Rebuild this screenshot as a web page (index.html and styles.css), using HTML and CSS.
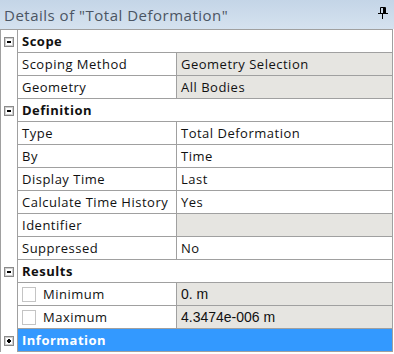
FILE: index.html
```html
<!DOCTYPE html>
<html lang="en">

<head>
    <meta charset="UTF-8">
    <title>Details of "Total Deformation"</title>
    <link rel="stylesheet" href="styles.css">
</head>

<body>
    <div class="title">
        <span>Details of "Total Deformation"</span>
        <svg class="pin" width="10" height="12" viewBox="0 0 10 12">
            <path d="M2.5 0.5h5v6h-5z" fill="none" stroke="#000" />
            <rect x="5" y="1" width="2" height="5" fill="#000" />
            <rect x="0" y="6" width="10" height="1" fill="#000" />
            <rect x="4" y="7" width="1" height="5" fill="#000" />
        </svg>
    </div>
    <div class="grid">
        <!-- Scope -->
        <div class="row head">
            <div class="gutter"><span class="box minus"></span></div>
            <div class="cells">Scope</div>
        </div>
        <div class="row">
            <div class="gutter"></div>
            <div class="cells"><div class="name">Scoping Method</div><div class="value ro">Geometry Selection</div></div>
        </div>
        <div class="row">
            <div class="gutter"></div>
            <div class="cells"><div class="name">Geometry</div><div class="value ro">All Bodies</div></div>
        </div>
        <!-- Definition -->
        <div class="row head">
            <div class="gutter"><span class="box minus"></span></div>
            <div class="cells">Definition</div>
        </div>
        <div class="row">
            <div class="gutter"></div>
            <div class="cells"><div class="name">Type</div><div class="value">Total Deformation</div></div>
        </div>
        <div class="row">
            <div class="gutter"></div>
            <div class="cells"><div class="name">By</div><div class="value">Time</div></div>
        </div>
        <div class="row">
            <div class="gutter"></div>
            <div class="cells"><div class="name">Display Time</div><div class="value">Last</div></div>
        </div>
        <div class="row">
            <div class="gutter"></div>
            <div class="cells"><div class="name">Calculate Time History</div><div class="value">Yes</div></div>
        </div>
        <div class="row">
            <div class="gutter"></div>
            <div class="cells"><div class="name">Identifier</div><div class="value ro"></div></div>
        </div>
        <div class="row">
            <div class="gutter"></div>
            <div class="cells"><div class="name">Suppressed</div><div class="value">No</div></div>
        </div>
        <!-- Results -->
        <div class="row head">
            <div class="gutter"><span class="box minus"></span></div>
            <div class="cells">Results</div>
        </div>
        <div class="row">
            <div class="gutter"></div>
            <div class="cells"><div class="name"><span class="check"></span>Minimum</div><div class="value ro num">0. m</div></div>
        </div>
        <div class="row">
            <div class="gutter"></div>
            <div class="cells"><div class="name"><span class="check"></span>Maximum</div><div class="value ro num">4.3474e-006 m</div></div>
        </div>
        <!-- Information -->
        <div class="row head info">
            <div class="gutter"><span class="box plus"></span></div>
            <div class="cells">Information</div>
        </div>
    </div>
</body>

</html>
```

FILE: styles.css
```css
* {
    margin: 0;
    padding: 0;
    box-sizing: border-box;
}

body {
    width: 394px;
    height: 354px;
    background: #ffffff;
    font-family: "Open Sans", "Noto Sans", sans-serif;
    font-size: 13px;
    letter-spacing: 0.5px;
    color: #111111;
    overflow: hidden;
}

.title {
    height: 29px;
    display: flex;
    align-items: center;
    justify-content: space-between;
    padding: 0 6px 0 4px;
    background: linear-gradient(#c4d5e7, #d5e2ef);
    font-size: 15px;
    color: #4b5563;
}

.pin {
    margin-bottom: 4px;
}

.grid {
    width: 393px;
    border: 1px solid #a0a0a0;
    border-bottom: none;
}

.row {
    display: flex;
    height: 23px;
}

.gutter {
    width: 17px;
    flex-shrink: 0;
    border-right: 1px solid #a0a0a0;
    display: flex;
    align-items: center;
    padding-left: 3px;
}

.cells {
    flex: 1;
    display: flex;
    border-bottom: 1px solid #a0a0a0;
}

.head .cells {
    align-items: center;
    padding-left: 4px;
    font-weight: bold;
}

.name {
    width: 159px;
    flex-shrink: 0;
    border-right: 1px solid #a0a0a0;
    padding-left: 4px;
    display: flex;
    align-items: center;
}

.value {
    flex: 1;
    padding-left: 4px;
    display: flex;
    align-items: center;
}

.ro {
    background: #e6e5e1;
}

.num {
    font-family: "Liberation Sans", Arial, sans-serif;
    font-size: 14px;
    letter-spacing: 0;
}

.check {
    width: 14px;
    height: 15px;
    border: 1px solid #c4c4c4;
    background: #ffffff;
    margin-right: 7px;
}

.box {
    width: 10px;
    height: 10px;
    border: 1px solid #8a8a8a;
    outline: 1px solid #d0d0d0;
    outline-offset: -2px;
    position: relative;
    background: #ffffff;
}

.box::before {
    content: "";
    position: absolute;
    left: 2px;
    top: 3px;
    width: 4px;
    height: 2px;
    background: #000000;
}

.plus::after {
    content: "";
    position: absolute;
    left: 3px;
    top: 2px;
    width: 2px;
    height: 4px;
    background: #000000;
}

.info .cells {
    background: #3399ff;
    color: #ffffff;
    border-bottom-color: #a0a0a0;
}
```
